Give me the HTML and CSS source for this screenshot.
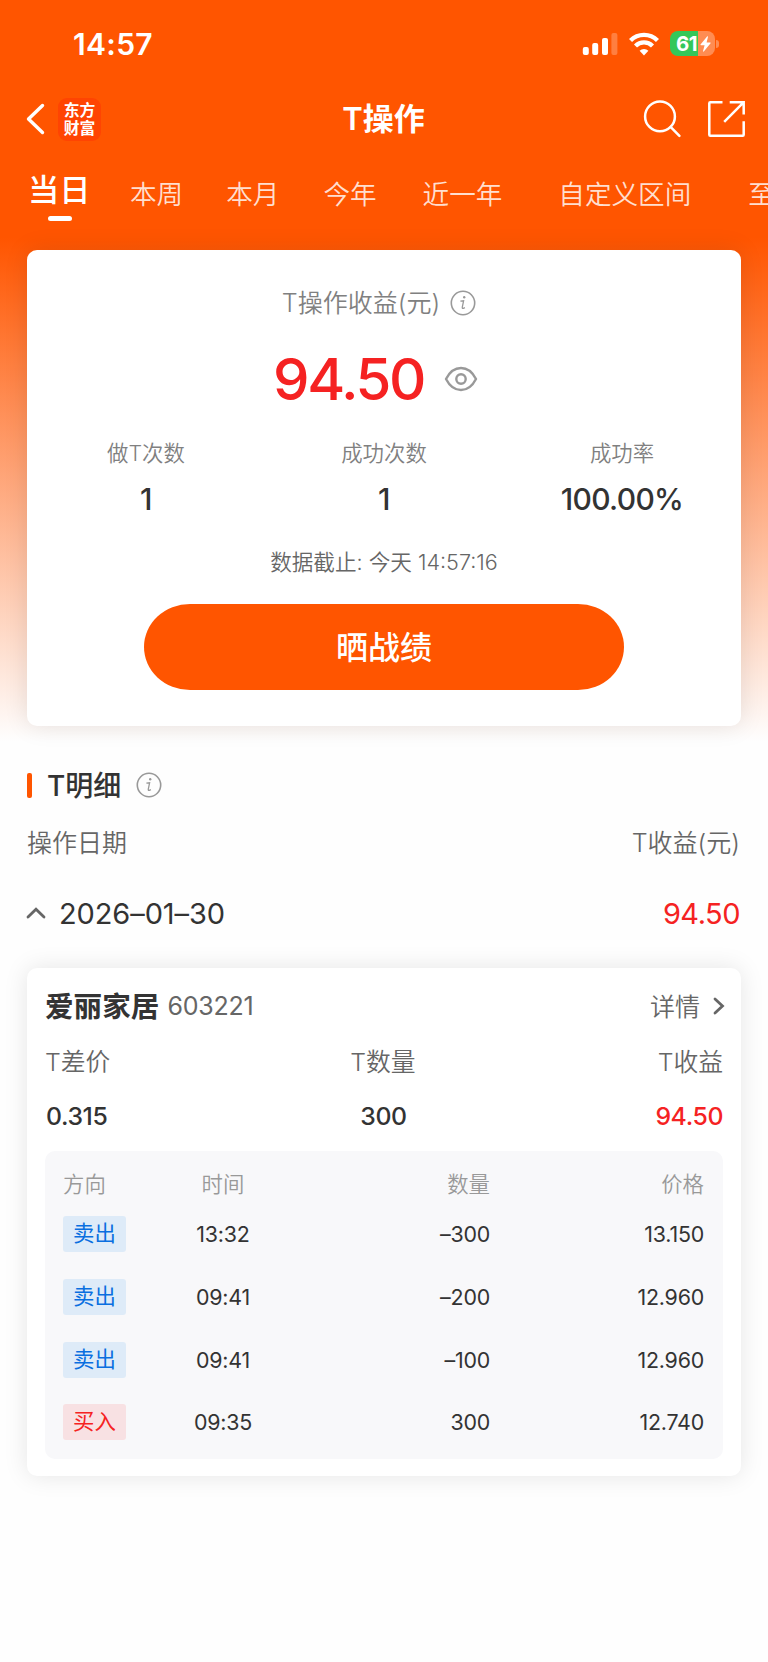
FILE: index.html
```html
<!DOCTYPE html>
<html lang="zh-CN">
<head>
<meta charset="utf-8">
<title>T操作</title>
<link rel="stylesheet" href="styles.css">
</head>
<body>
<div class="screen">
  <header class="status">
    <span class="clock">14:57</span>
    <div class="status-icons">
      <svg class="signal" width="36" height="24" viewBox="0 0 36 24">
        <rect x="0.8" y="15" width="6" height="8" rx="2" fill="#fff"/>
        <rect x="10.2" y="11" width="6" height="12" rx="2" fill="#fff"/>
        <rect x="20" y="6" width="6" height="17" rx="2" fill="#fff"/>
        <rect x="29.4" y="1" width="6" height="22" rx="2" fill="#fff" opacity=".25"/>
      </svg>
      <svg class="wifi" width="30" height="24" viewBox="0 0 30 24">
        <g fill="none" stroke="#fff" stroke-width="4.3">
          <path d="M1.5 8.6A19 19 0 0 1 28.500 8.600"/>
          <path d="M6.500 14A12 12 0 0 1 23.500 14"/>
        </g>
        <path d="M15 23.400L10.600 18.800A6.400 6.400 0 0 1 19.400 18.800Z" fill="#fff"/>
      </svg>
      <div class="battery">
        <div class="battery-body"><span>61</span>
          <svg width="11" height="16" viewBox="0 0 11 16"><path d="M7.300.300L.500 8.600Q.200 9.200 1 9.200H4.600L3 15.200Q3.200 16 4 15.300L10.600 7.200Q10.900 6.500 10.200 6.500H6.600L8 .700Q7.900 0 7.300.300Z" fill="#fff"/></svg>
        </div>
        <i class="battery-cap"></i>
      </div>
    </div>
  </header>

  <nav class="navbar">
    <div class="nav-left">
      <svg width="19" height="32" viewBox="0 0 19 32"><path d="M16.500 2.500L2.500 16L16.500 29.500" fill="none" stroke="#fff" stroke-width="3.400" stroke-linecap="round" stroke-linejoin="round"/></svg>
      <div class="logo">东方<br>财富</div>
    </div>
    <h1>T操作</h1>
    <div class="nav-right">
      <svg width="38" height="38" viewBox="0 0 38 38" fill="none" stroke="#fff" stroke-width="2.500" stroke-linecap="round"><circle cx="17" cy="16.400" r="14.900"/><path d="M27.800 27.200L36.400 35.800"/></svg>
      <svg width="38" height="38" viewBox="0 0 38 38" fill="none" stroke="#fff" stroke-width="2.500" stroke-linejoin="round"><path d="M15.500 2.300H3.300Q2.300 2.300 2.300 3.300V34.700Q2.300 35.700 3.300 35.700H35.700Q36.700 35.700 36.700 34.700V21.300"/><path d="M22.700 2.300H36.700V14.500M36.300 2.700L17.200 21.800" stroke-linejoin="miter"/></svg>
    </div>
  </nav>

  <div class="tabs">
    <span class="tab active">当日</span>
    <span class="tab t2">本周</span>
    <span class="tab t3">本月</span>
    <span class="tab t4">今年</span>
    <span class="tab t5">近一年</span>
    <span class="tab t6">自定义区间</span>
    <span class="tab t7">至今</span>
  </div>

  <section class="card summary">
    <div class="summary-label"><span>T操作收益(元)</span>
      <svg width="26" height="26" viewBox="0 0 26 26"><circle cx="13" cy="13" r="11.700" fill="none" stroke="#999" stroke-width="1.600"/><circle cx="14.200" cy="7.300" r="1.200" fill="#999"/><path d="M10.400 11.200L13.600 10.800L12.300 17.200Q12.100 18.700 13.300 18.400L14.900 17.700" fill="none" stroke="#999" stroke-width="1.300"/></svg>
    </div>
    <div class="summary-amount"><span>94.50</span>
      <svg width="34" height="26" viewBox="0 0 34 26" fill="none" stroke="#999" stroke-width="2.400"><path d="M2 13C5.500 6.200 10.500 2 17 2S28.500 6.200 32 13C28.500 19.800 23.500 24 17 24S5.500 19.800 2 13Z" stroke-linejoin="round"/><circle cx="17" cy="13" r="4.700"/></svg>
    </div>
    <div class="stats">
      <div><label>做T次数</label><b>1</b></div>
      <div><label>成功次数</label><b>1</b></div>
      <div><label>成功率</label><b>100.00%</b></div>
    </div>
    <p class="note">数据截止: 今天 14:57:16</p>
    <button class="share">晒战绩</button>
  </section>

  <div class="section-title"><i></i><h2>T明细</h2>
    <svg width="26" height="26" viewBox="0 0 26 26"><circle cx="13" cy="13" r="11.700" fill="none" stroke="#999" stroke-width="1.600"/><circle cx="14.200" cy="7.300" r="1.200" fill="#999"/><path d="M10.400 11.200L13.600 10.800L12.300 17.200Q12.100 18.700 13.300 18.400L14.900 17.700" fill="none" stroke="#999" stroke-width="1.300"/></svg>
  </div>
  <div class="list-head"><span>操作日期</span><span>T收益(元)</span></div>
  <div class="date-row">
    <svg width="20" height="14" viewBox="0 0 20 14"><path d="M2 11L10 3.200L18 11" fill="none" stroke="#666" stroke-width="2.800" stroke-linecap="round"/></svg>
    <span class="date">2026–01–30</span><span class="profit">94.50</span>
  </div>

  <section class="card stock">
    <div class="stock-head">
      <b>爱丽家居</b><span class="code">603221</span><span class="detail">详情</span>
      <svg width="12" height="18" viewBox="0 0 12 18"><path d="M2 2L9.500 9L2 16" fill="none" stroke="#666" stroke-width="2.800" stroke-linecap="round"/></svg>
    </div>
    <div class="triple labels"><span>T差价</span><span>T数量</span><span>T收益</span></div>
    <div class="triple values"><span>0.315</span><span>300</span><span class="red">94.50</span></div>
    <div class="trades">
      <div class="trade head"><span>方向</span><span>时间</span><span>数量</span><span>价格</span></div>
      <div class="trade"><em>卖出</em><span>13:32</span><span>–300</span><span>13.150</span></div>
      <div class="trade"><em>卖出</em><span>09:41</span><span>–200</span><span>12.960</span></div>
      <div class="trade"><em>卖出</em><span>09:41</span><span>–100</span><span>12.960</span></div>
      <div class="trade"><em class="buy">买入</em><span>09:35</span><span>300</span><span>12.740</span></div>
    </div>
  </section>
</div>
</body>
</html>
```
FILE: styles.css
```css
* { box-sizing: border-box; margin: 0; padding: 0; }
body { background: #fefefe; font-family: Inter, "Noto Sans CJK SC", sans-serif; color: #333; }
svg { display: block; flex: none; }
i, em { font-style: normal; }
.screen {
  width: 768px; height: 1662px; overflow: hidden; white-space: nowrap;
  background: linear-gradient(#ff5500 0, #ff5500 238px, #fefefe 742px);
}

.status { height: 75px; padding: 23px 49px 0 73px; display: flex; justify-content: space-between; color: #fff; }
.clock { font-size: 30px; line-height: 42px; font-weight: 580; letter-spacing: .3px; }
.status-icons { display: flex; align-items: center; height: 41px; }
.wifi { margin-left: 11px; }
.battery { display: flex; align-items: center; margin-left: 11px; }
.battery-body {
  width: 45px; height: 25px; border-radius: 8px; display: flex; align-items: center; padding-left: 6px;
  background: linear-gradient(90deg, #34c759 28px, #ff8c52 28px);
}
.battery-body span { font-size: 20.5px; line-height: 25px; font-weight: 650; letter-spacing: -.5px; width: 23.5px; }
.battery-cap { width: 3px; height: 8px; margin-left: 1px; border-radius: 0 4px 4px 0; background: #ff8c52; }

.navbar { height: 88px; display: grid; grid-template-columns: 1fr auto 1fr; align-items: center; padding: 0 23px 0 26px; color: #fff; }
.nav-left { display: flex; align-items: center; gap: 13px; }
.logo {
  width: 43px; height: 43px; padding-top: 3px; border-radius: 9px; background: #ff4402; text-align: center;
  font: 700 15.800px/18px "Noto Sans CJK SC", sans-serif;
}
.navbar h1 { margin-right: 4px; font-size: 31px; line-height: 40px; font-weight: 580; }
.nav-right { display: flex; justify-content: flex-end; gap: 26px; }

.tabs { height: 87px; padding-left: 28px; display: flex; align-items: flex-start; color: rgba(255, 255, 255, .82); }
.tab { font-size: 26.600px; line-height: 40px; padding-top: 11px; font-weight: 350; flex: none; }
.tab.active { font-size: 31.200px; font-weight: 500; color: #fff; padding-top: 7px; width: 62px; }
.tab.active::after { content: ""; display: block; width: 24px; height: 5px; margin: 6px 0 0 20px; border-radius: 3px; background: #fff; }
.t2 { margin-left: 40px; }
.t3 { margin-left: 43px; }
.t4 { margin-left: 44px; }
.t5 { margin-left: 46px; }
.t6 { margin-left: 56px; }
.t7 { margin-left: 57px; }

.card { width: 714px; margin-left: 27px; border-radius: 10px; background: #fff; box-shadow: 0 0 24px rgba(0, 0, 0, .1); }
.summary { height: 476px; padding-top: 33px; display: flex; flex-direction: column; align-items: center; }
.summary-label { display: flex; align-items: center; gap: 10px; height: 40px; padding-right: 10px; font-size: 25px; line-height: 38px; font-weight: 350; color: #808080; }
.summary-amount { display: flex; align-items: center; gap: 20px; height: 56px; margin-top: 28px; padding-right: 17px; font-size: 58px; line-height: 56px; font-weight: 530; letter-spacing: -2.400px; color: #f52222; }
.stats { width: 100%; display: grid; grid-template-columns: repeat(3, 1fr); margin-top: 31px; text-align: center; }
.stats label { display: block; font-size: 21.400px; line-height: 30px; font-weight: 350; color: #808080; }
.stats b { display: block; margin-top: 11px; font-size: 30px; line-height: 40px; font-weight: 540; letter-spacing: -.7px; }
.note { margin-top: 28px; font-size: 21.600px; line-height: 31px; font-weight: 350; color: #666; }
.share { margin-top: 26px; padding-top: 1px; width: 480px; height: 86px; border: 0; border-radius: 46px / 43px; background: #ff5500; color: #fff; font: 500 32px/85px Inter, "Noto Sans CJK SC", sans-serif; }

.section-title { display: flex; align-items: center; height: 40px; margin: 39px 0 0 27px; }
.section-title i { width: 5px; height: 25px; border-radius: 2px; background: #ff5500; }
.section-title h2 { margin: 1px 15px 0; font-size: 28px; line-height: 40px; font-weight: 500; }
.list-head { display: flex; justify-content: space-between; padding: 0 28px 0 27px; margin-top: 18px; font-size: 25px; line-height: 40px; font-weight: 350; color: #666; }
.date-row { display: flex; align-items: center; height: 40px; margin-top: 30px; padding: 0 28px 0 26px; font-size: 29px; font-weight: 400; }
.date { margin-left: 13px; letter-spacing: -.1px; }
.profit { margin-left: auto; color: #f52222; letter-spacing: -.5px; }

.stock { margin-top: 35px; height: 508px; padding: 18px 18px 17px; }
.stock-head { display: flex; align-items: center; height: 40px; color: #666; }
.stock-head b { margin-top: -3px; font-size: 28.600px; font-weight: 600; color: #333; }
.code { margin-left: 8px; font-size: 25px; font-weight: 370; letter-spacing: -.2px; }
.detail { margin: -2px 13px 0 auto; font-size: 25px; font-weight: 350; }
.stock-head svg { margin-right: -2px; }
.triple { display: grid; grid-template-columns: 1fr 1fr 1fr; font-size: 25px; line-height: 40px; }
.triple span:nth-child(2) { text-align: center; padding-right: 2px; }
.triple span:nth-child(3) { text-align: right; }
.labels { margin-top: 16px; font-size: 24.800px; font-weight: 350; color: #666; }
.values { margin-top: 14px; font-size: 24.800px; font-weight: 500; letter-spacing: -.4px; padding-left: 1px; }
.red { color: #f52222; }
.trades { height: 308px; margin-top: 15px; padding: 12px 19px 0 18px; border-radius: 10px; background: #f8f8fa; }
.trade { display: grid; grid-template-columns: 63px 195px 169px 1fr; align-items: center; height: 62.700px; font-size: 21.400px; font-weight: 370; }
.trade span:nth-child(2) { text-align: center; padding-right: 1px; }
.trade span:nth-child(3), .trade span:nth-child(4) { text-align: right; }
.trade:not(.head) span { letter-spacing: -.2px; }
.trade.head { height: 38px; margin-bottom: 2px; font-weight: 350; color: #999; }
.trade em { width: 63px; height: 36px; border-radius: 3px; background: #deebf8; color: #0a6fe0; line-height: 35px; text-align: center; }
.trade em.buy { background: #f8e1e3; color: #f52222; }
```
